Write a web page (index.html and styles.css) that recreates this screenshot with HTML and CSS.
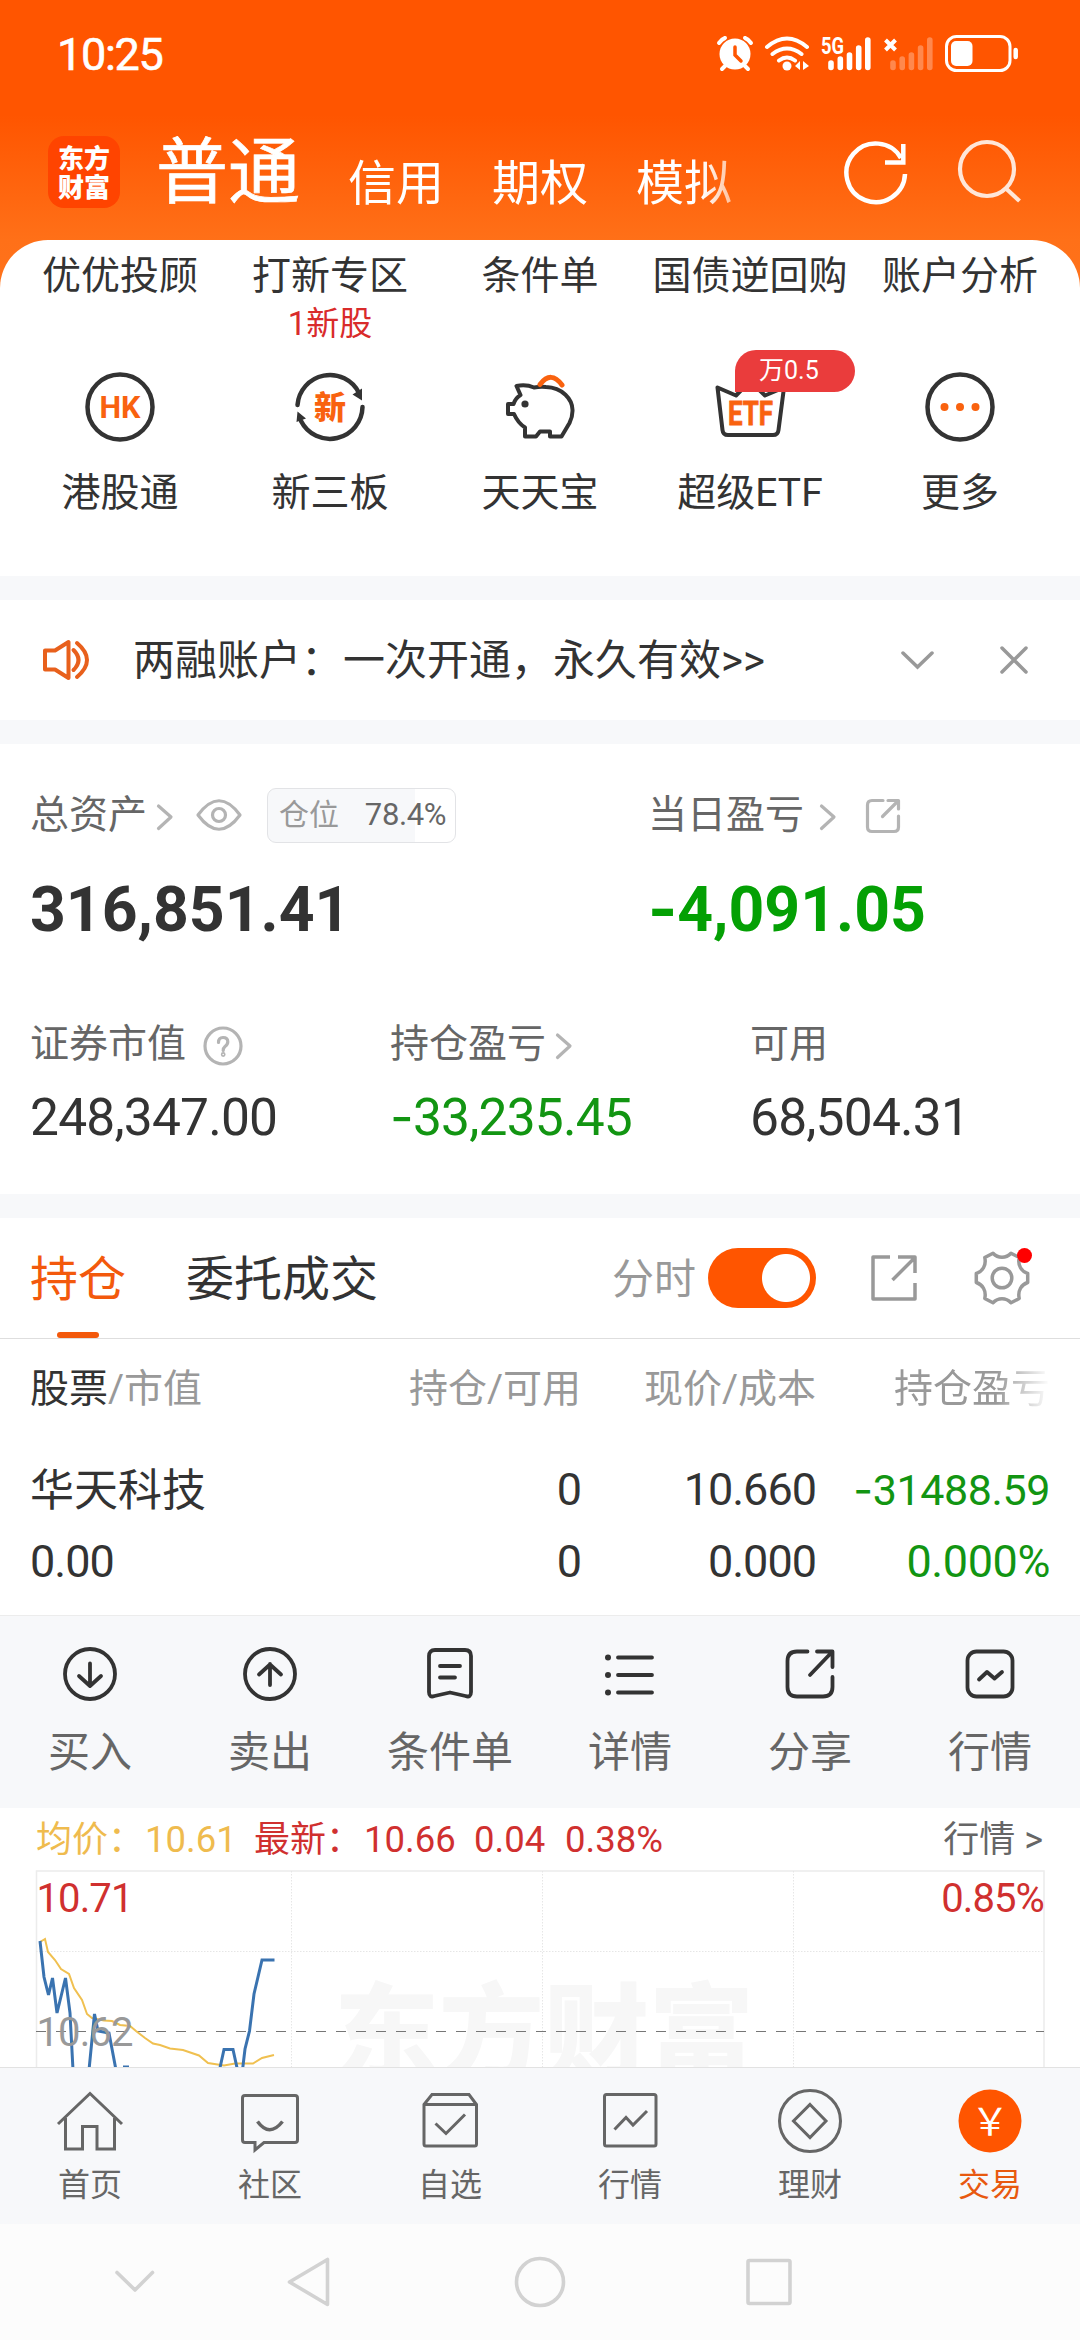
FILE: index.html
```html
<!DOCTYPE html>
<html lang="zh-CN">
<head>
<meta charset="utf-8">
<title>东方财富 交易</title>
<link rel="stylesheet" href="styles.css">
</head>
<body>
<div class="screen">

  <header class="top">
    <div class="status">
      <span class="time">10:25</span>
      <svg class="status-icons" width="310" height="40" viewBox="712 34 310 40" fill="none" stroke="#fff" stroke-linecap="round">
        <circle cx="735" cy="54" r="15.5" fill="#fff" stroke="none"/>
        <path d="M719 43q3-4 6-5M751 43q-3-4-6-5M725 66l-3 3M745 66l3 3" stroke-width="4"/>
        <path d="M735 47v8l6 6" stroke="#ff5500" stroke-width="3.5"/>
        <path d="M767 47q20-17 40 0M772.500 54q14.500-11 29 0M779 60.500q8-6 16 0" stroke-width="4"/>
        <circle cx="787" cy="66" r="4.500" fill="#fff" stroke="none"/>
        <path d="M795 66l5-5v9zM809 66l-6-5v9z" fill="#fff" stroke="none"/>
        <text class="net" x="821" y="53.500" textLength="23" lengthAdjust="spacingAndGlyphs">5G</text>
        <path d="M831 63v4.500M840.300 59v8.500M849.500 55v12.500M858.700 48v19.500M867.800 40v27.500" stroke-width="5.600"/>
        <path d="M893 63v4.500M902.200 59v8.500M911.400 55v12.500M920.600 48v19.500M929.800 40v27.500" stroke-width="5.600" opacity=".3"/>
        <path d="M885.500 40l10 10M895.500 40l-10 10" stroke-width="4" stroke-linecap="butt"/>
        <rect x="946.500" y="36.500" width="63.500" height="34" rx="10" stroke-width="3"/>
        <rect x="951" y="41" width="21.500" height="25" rx="5" fill="#fff" stroke="none"/>
        <path d="M1015.700 50v7" stroke-width="4.500"/>
      </svg>
    </div>
    <div class="bar">
      <div class="logo"><span>东方</span><span>财富</span></div>
      <nav class="accounts">
        <span class="acc on">普通</span><span class="acc">信用</span><span class="acc">期权</span><span class="acc">模拟</span>
      </nav>
      <svg class="refresh" width="70" height="70" viewBox="841 138 70 70" fill="none" stroke="#fff" stroke-width="4.500">
        <path d="M905 174a29.300 29.300 0 1 1-4-16M903.300 144v18.500H885"/>
      </svg>
      <svg class="search" width="70" height="70" viewBox="954 134 70 70" fill="none" stroke="#ffe6d8" stroke-width="4.200">
        <circle cx="987" cy="169" r="27"/><path d="M1006 188.500l13.500 12.500"/>
      </svg>
    </div>
  </header>

  <section class="panel">
    <div class="shortcut">
      <span class="lbl">优优投顾</span><span class="sub"></span>
      <svg width="80" height="80" viewBox="0 0 80 80"><circle cx="40" cy="40" r="32.500" class="ring"/><text class="glyph" x="19.500" y="51" font-size="31" textLength="41" lengthAdjust="spacingAndGlyphs">HK</text></svg>
      <span class="lbl">港股通</span>
    </div>
    <div class="shortcut">
      <span class="lbl">打新专区</span><span class="sub">1新股</span>
      <svg width="80" height="80" viewBox="0 0 80 80"><path class="ring" d="M7.500 38A32.500 32.500 0 0 1 69 26M72.500 40A32.500 32.500 0 0 1 11 54"/><path class="tip" d="M62.500 27.500L72 21.500V33.500zM7.500 44.500L16 51.500L6.500 55z"/><text class="glyph heavy" x="24" y="51.500" font-size="32">新</text></svg>
      <span class="lbl">新三板</span>
    </div>
    <div class="shortcut">
      <span class="lbl">条件单</span><span class="sub"></span>
      <svg width="80" height="80" viewBox="0 0 80 80"><path class="ring pig" d="M16.500 19Q26 17 34 20.500Q40 19.500 46 20C62 20.500 73 32 72.500 44Q72.500 50 69.500 56L61.500 69.500H50V64.500H40L36 69.500H25V60.500Q18 56 14 47H8V37H13.500Q15.500 31 20.500 28Z"/><circle cx="25" cy="37" r="3.600" class="tip"/><path d="M40 17.500Q51 3 62 18" fill="none" stroke="#f9620f" stroke-width="5" stroke-linecap="round"/></svg>
      <span class="lbl">天天宝</span>
    </div>
    <div class="shortcut">
      <span class="lbl">国债逆回购</span><span class="sub"></span>
      <svg width="80" height="80" viewBox="0 0 80 80"><path class="ring etf" d="M7.500 20.500L26 28.500L40 14L55 28.500L74 20.500L68.500 63Q68 68 63 68H18Q13 68 12.500 63Z"/><text class="glyph thick" x="18" y="57.800" font-size="33" textLength="45" lengthAdjust="spacingAndGlyphs">ETF</text></svg>
      <span class="lbl">超级ETF</span>
      <span class="badge">万0.5</span>
    </div>
    <div class="shortcut">
      <span class="lbl">账户分析</span><span class="sub"></span>
      <svg width="80" height="80" viewBox="0 0 80 80"><circle cx="40" cy="40" r="32.500" class="ring"/><g fill="#f9620f"><circle cx="24.500" cy="40" r="4"/><circle cx="40" cy="40" r="4"/><circle cx="55.500" cy="40" r="4"/></g></svg>
      <span class="lbl">更多</span>
    </div>
  </section>

  <section class="notice">
    <svg width="50" height="44" viewBox="41 638 50 44" fill="none" stroke="#e8601c" stroke-width="4" stroke-linejoin="round" stroke-linecap="round"><path d="M45 650.500H55L68.500 642V678L55 669.500H45ZM73.500 650q10 10 0 20M77 643q20 17 0 34"/></svg>
    <span class="msg">两融账户：一次开通，永久有效&gt;&gt;</span>
    <svg width="34" height="24" viewBox="0 0 34 24" class="grey"><path d="M3 5l14.500 14L32 5"/></svg>
    <svg width="30" height="30" viewBox="0 0 30 30" class="grey close"><path d="M3 3l24 24M27 3L3 27"/></svg>
  </section>

  <section class="assets">
    <div class="pair">
      <div class="total">
        <div class="cap">总资产
          <svg class="pale go" width="18" height="28" viewBox="0 0 18 28"><path d="M2.500 3l12.500 11L2.500 25.500"/></svg>
          <svg class="pale eye" width="46" height="34" viewBox="0 0 46 34"><path d="M2 17Q23-11.500 44 17Q23 45.500 2 17Z"/><circle cx="23" cy="17" r="6.500"/></svg>
          <span class="ratio"><i>仓位</i><b>78.4%</b></span>
        </div>
        <div class="big">316,851.41</div>
      </div>
      <div>
        <div class="cap">当日盈亏
          <svg class="pale go wide" width="18" height="28" viewBox="0 0 18 28"><path d="M2.500 3l12.500 11L2.500 25.500"/></svg>
          <svg class="pale out" width="38" height="38" viewBox="0 0 38 38"><path d="M19 3.500H8Q3.500 3.500 3.500 8V30Q3.500 34.500 8 34.500H30Q34.500 34.500 34.500 30V19M24 3.500H34.500V12M34 4L18.500 19.500"/></svg>
        </div>
        <div class="big down"><i class="minus">-</i>4,091.05</div>
      </div>
    </div>
    <div class="trio">
      <div>
        <div class="cap">证券市值
          <svg class="pale help" width="42" height="42" viewBox="0 0 42 42"><circle cx="21" cy="21" r="18"/><path d="M16.500 17.500Q16.500 12.500 21 12.500Q25.800 12.500 25.800 16.800Q25.800 19.500 23 21.500Q21.200 23 21.200 25.500"/><circle cx="21.200" cy="29.500" r=".8"/></svg>
        </div>
        <div class="num">248,347.00</div>
      </div>
      <div>
        <div class="cap">持仓盈亏
          <svg class="pale go" width="18" height="28" viewBox="0 0 18 28"><path d="M2.500 3l12.500 11L2.500 25.500"/></svg>
        </div>
        <div class="num down"><i class="minus">-</i>33,235.45</div>
      </div>
      <div>
        <div class="cap">可用</div>
        <div class="num">68,504.31</div>
      </div>
    </div>
  </section>

  <section class="tabs">
    <span class="tab on">持仓</span>
    <span class="tab">委托成交</span>
    <span class="tlabel">分时</span>
    <span class="toggle"></span>
    <svg class="mid share" width="50" height="50" viewBox="869 1253 50 50"><path d="M890 1257H873V1299H915V1283M898 1257H915V1273M914.500 1258L892.500 1280"/></svg>
    <svg class="mid gear" width="64" height="64" viewBox="972 1246 64 64">
      <path d="M984.800 1257.500L993 1253.200C998 1258.500 1006 1258.500 1011 1253.200L1019.200 1257.500C1017.500 1265.500 1021.500 1271.500 1027.700 1273.500V1282.500C1021.500 1284.500 1017.500 1290.500 1019.200 1298.500L1011 1302.800C1006 1297.500 998 1297.500 993 1302.800L984.800 1298.500C986.500 1290.500 982.500 1284.500 976.300 1282.500V1273.500C982.500 1271.500 986.500 1265.500 984.800 1257.500Z"/><circle cx="1002" cy="1278" r="9.800"/>
      <circle cx="1024.500" cy="1255.500" r="7.500" fill="#f00" stroke="none"/>
    </svg>
  </section>

  <section class="table">
    <div class="row head"><span><em>股票</em>/市值</span><span>持仓/可用</span><span>现价/成本</span><span class="fade">持仓盈亏</span></div>
    <div class="row first"><span class="name">华天科技</span><span>0</span><span>10.660</span><span class="down small"><i class="minus">-</i>31488.59</span></div>
    <div class="row"><span>0.00</span><span>0</span><span>0.000</span><span class="down pct">0.000%</span></div>
  </section>

  <section class="actions">
    <div><svg width="60" height="60" viewBox="0 0 60 60"><circle cx="30" cy="30" r="25"/><path d="M30 19.500V41M19 32l11 10L41 32"/></svg><span>买入</span></div>
    <div><svg width="60" height="60" viewBox="0 0 60 60"><circle cx="30" cy="30" r="25"/><path d="M30 41V20M19 30.500l11-10l11 10"/></svg><span>卖出</span></div>
    <div><svg width="60" height="60" viewBox="0 0 60 60"><path d="M15 6H45Q51 6 51 12V48Q51 54 45.500 52L30 48.500L14.500 52Q9 54 9 48V12Q9 6 15 6ZM20 22H40M20 33.500H35"/></svg><span>条件单</span></div>
    <div><svg width="60" height="60" viewBox="0 0 60 60"><path d="M18 13.500H52M18 31H52M18 48.500H52"/><g class="dots"><circle cx="8" cy="13.500" r="3"/><circle cx="8" cy="31" r="3"/><circle cx="8" cy="48.500" r="3"/></g></svg><span>详情</span></div>
    <div><svg width="60" height="60" viewBox="0 0 60 60"><path d="M27.500 7.500H17Q7.500 7.500 7.500 17V43Q7.500 52.500 17 52.500H43Q52.500 52.500 52.500 43V33M37 7.500H52.500V23M52 8L30 31"/></svg><span>分享</span></div>
    <div><svg width="60" height="60" viewBox="0 0 60 60"><rect x="7.500" y="7.500" width="45" height="45" rx="9"/><path d="M19 35.500l8-7.500l7.500 6.500L42 28"/></svg><span>行情</span></div>
  </section>

  <section class="quote">
    <div class="legend">
      <span class="avg">均价：</span><span class="avg v1">10.61</span>
      <span class="up n2">最新：</span><span class="up v2">10.66</span><span class="up v3">0.04</span><span class="up v4">0.38%</span>
      <span class="more">行情 &gt;</span>
    </div>
    <svg class="chart" width="1080" height="197" viewBox="0 1870 1080 197" fill="none">
      <text class="mark" x="334" y="2071" textLength="420">东方财富</text>
      <path d="M36.500 2067V1871H1044V2067" stroke="#ececec" stroke-width="1.500"/>
      <path d="M36 1951.500H1044M291.500 1871V2067M542.500 1871V2067M793.500 1871V2067" stroke="#e6e6e6" stroke-dasharray="1.500 1.500"/>
      <path d="M36 2031.500H1044" stroke="#777" stroke-dasharray="10 10"/>
      <path d="M40 1942L45 1939L48 1952L55 1960L61 1969L69 1974L74 1988L82 2000L87 2014L92 2018L104 2020.500L112 2021L120 2025L130 2026L136 2031L145 2038L153 2043.500L160 2045L170 2048.500L183 2050L199 2055.500L208 2063L224 2065.500L235 2063.500L253 2063.500L262 2058L274 2055" stroke="#f0c050" stroke-width="2"/>
      <path d="M40 1941L44 1977L48.500 1995L52.500 1978L57 2013L65.500 1978L70 2013L73 2070M89 2070L94.500 2014L98 2031L109 2033L116 2070M123 2067H129M219.500 2070L224 2049.500H233L237.500 2070M242.500 2070L245 2049L249.500 2031L254 1994L262 1960H274.500" stroke="#3a73b0" stroke-width="3"/>
      <text class="lab up" x="36.500" y="1912">10.71</text>
      <text class="lab up" x="1044" y="1912" text-anchor="end">0.85%</text>
      <text class="lab flat" x="36.500" y="2046">10.62</text>
    </svg>
  </section>

  <nav class="dock">
    <div><svg width="72" height="66" viewBox="54 2088 72 66"><path d="M58 2124L90 2093.500L122 2124M65.500 2118V2149H82.500V2126.500H97V2149H114.500V2118"/></svg><span>首页</span></div>
    <div><svg width="72" height="66" viewBox="234 2088 72 66"><path d="M245 2095.500H295Q297.500 2095.500 297.500 2098V2140Q297.500 2142.500 295 2142.500H264L255 2150V2142.500H245Q242.500 2142.500 242.500 2140V2098Q242.500 2095.500 245 2095.500Z"/><path d="M257.500 2121.500q12 16.500 25 0" stroke-width="3.500"/></svg><span>社区</span></div>
    <div><svg width="72" height="66" viewBox="413 2088 72 66"><path d="M423 2104.500L431 2094.500H468L475.500 2104.500V2144Q475.500 2146 473.500 2146H425Q423 2146 423 2144ZM423 2104.500H475.500M434.500 2123.500L445 2133.500L464 2114.500"/></svg><span>自选</span></div>
    <div><svg width="72" height="66" viewBox="593 2088 72 66"><rect x="603.500" y="2094.500" width="51.500" height="51.500" rx="2"/><path d="M613.500 2129.500L625 2117.500L632 2125L646 2111"/></svg><span>行情</span></div>
    <div><svg width="72" height="66" viewBox="774 2088.500 72 66"><circle cx="810" cy="2121.500" r="30.500"/><path d="M810 2105L826 2121.500L810 2138L793.500 2121.500Z"/></svg><span>理财</span></div>
    <div class="on"><svg width="72" height="66" viewBox="0 0 72 66"><circle cx="36" cy="33" r="31.500" fill="#ff5500" stroke="none"/><text class="yen" x="36" y="47" text-anchor="middle">￥</text></svg><span>交易</span></div>
  </nav>

  <div class="sysnav">
    <svg width="1080" height="116" viewBox="0 2224 1080 116"><path d="M117 2272.500L135 2290L152.500 2272.500M327.500 2259.500V2304.500L289.500 2282Z"/><circle cx="540" cy="2282" r="23.500"/><rect x="748" y="2260.500" width="42" height="43" rx="1.500"/></svg>
  </div>
</div>
</body>
</html>
```
FILE: styles.css
```css
* { box-sizing: border-box; margin: 0; padding: 0; }
body { width: 1080px; background: #f7f8fa; font-family: Roboto, "Noto Sans CJK SC", sans-serif; color: #333; }
i, em, b { font-style: normal; font-weight: 400; }
svg { display: block; flex: none; }
span { white-space: nowrap; }
.screen { width: 1080px; height: 2340px; overflow: hidden; display: flex; flex-direction: column; }
.screen > * { flex: none; }

/* header */
.top { height: 300px; margin-bottom: -60px; background: linear-gradient(#ff5500 0, #ff5500 115px, #ff7018 240px, #ff731c 300px); }
.status { height: 108px; display: flex; align-items: center; justify-content: space-between; padding: 0 58px 0 57px; color: #fff; }
.time { font-size: 45px; font-weight: 400; letter-spacing: -1.3px; -webkit-text-stroke: .6px #fff; }
.net { font-size: 23px; font-weight: 700; fill: #fff; stroke: none; }
.bar { height: 128px; display: flex; align-items: center; padding-left: 48px; color: #fff; }
.logo { width: 72px; height: 72px; border-radius: 16px; background: #ff4400; display: flex; flex-direction: column; align-items: center; justify-content: center; font-size: 26px; line-height: 29px; font-weight: 900; font-family: "Noto Sans CJK SC", sans-serif; padding-bottom: 3px; }
.accounts { width: 620px; margin-left: 36px; display: flex; align-items: center; gap: 48px; -webkit-mask-image: linear-gradient(90deg, #000 88%, transparent); mask-image: linear-gradient(90deg, #000 88%, transparent); }
.acc { font-size: 48px; line-height: 72px; padding-top: 24px; }
.acc.on { font-size: 72px; line-height: 84px; padding-top: 2px; -webkit-text-stroke: .7px #fff; }
.refresh { margin-left: 65px; margin-top: 2px; }
.search { margin-left: 43px; margin-top: -6px; }

/* shortcuts */
.panel { height: 336px; padding: 12px 15px 0; background: #fff; border-radius: 48px 48px 0 0; display: grid; grid-template-columns: repeat(5, 210px); }
.shortcut { position: relative; display: flex; flex-direction: column; align-items: center; }
.lbl { font-size: 39px; line-height: 48px; }
.sub { font-size: 33px; line-height: 44px; height: 44px; margin-top: 2px; margin-bottom: 21px; color: #d92b2b; }
.shortcut svg { margin-bottom: 22px; }
.ring { fill: none; stroke: #333; stroke-width: 4.5; stroke-linejoin: round; stroke-linecap: round; }
.pig, .etf { stroke-width: 4; }
.tip { fill: #333; }
.glyph { fill: #f9620f; font-weight: 700; }
.thick { stroke: #f9620f; stroke-width: .8; }
.heavy { font-weight: 900; }
.badge { position: absolute; left: 90px; top: 98px; width: 120px; height: 42px; border-radius: 21px 21px 21px 0; background: #ea3c3c; color: #fff; font-size: 25px; line-height: 42px; padding-left: 24px; }

/* notice */
.notice { margin-top: 24px; height: 120px; background: #fff; display: flex; align-items: center; padding: 0 51px 0 41px; }
.msg { font-size: 42px; line-height: 60px; margin: 2px auto 0 42px; }
.grey { fill: none; stroke: #999; stroke-width: 3.5; stroke-linecap: round; }
.close { margin-left: 65px; }

/* assets */
.assets { margin-top: 24px; height: 450px; background: #fff; padding: 41px 30px 0; color: #333; }
.cap { display: flex; align-items: center; font-size: 39px; line-height: 60px; height: 60px; color: #666; }
.pair { display: grid; grid-template-columns: 618px auto; }
.pale { fill: none; stroke: #b4b4b4; stroke-width: 3.2; stroke-linecap: round; stroke-linejoin: round; }
.go { margin: 4px 0 0 9px; }
.go.wide { margin-left: 15px; }
.eye { margin-left: 22px; }
.out { margin: 2px 0 0 27px; }
.help { margin: 4px 0 0 16px; }
.ratio { margin-left: 25px; width: 189px; height: 55px; border: 1.500px solid #e2e3e6; border-radius: 9px; background: linear-gradient(90deg, #f7f8fa 78.4%, #fff 78.4%); display: flex; align-items: center; justify-content: space-between; padding: 0 9px 0 11px; }
.ratio i { font-size: 30px; color: #999; }
.ratio b { font-size: 31px; letter-spacing: -.4px; }
.big { font-size: 62.5px; font-weight: 700; line-height: 80px; height: 80px; margin-top: 25px; margin-bottom: -1px; }
.minus { font-family: Inter, sans-serif; font-weight: inherit; line-height: 0; }
.down { color: #129512; }
.big.down { color: #04a004; }
.trio { display: grid; grid-template-columns: repeat(3, 360px); margin-top: 65px; }
.num { font-size: 51.5px; line-height: 60px; margin-top: 14px; letter-spacing: -.8px; }

/* tabs */
.tabs { margin-top: 24px; height: 121px; background: #fff; border-bottom: 1.500px solid #dedede; display: flex; align-items: center; padding-left: 30px; }
.tab { position: relative; font-size: 48px; line-height: 118px; height: 120px; margin-right: 60px; padding-top: 3px; }
.tab.on { color: #f3590c; }
.tab.on::after { content: ""; position: absolute; left: 27px; bottom: 0; width: 42px; height: 6px; border-radius: 3px; background: #f3590c; }
.tlabel { margin-left: 174px; font-size: 42px; line-height: 60px; color: #999; padding-top: 3px; }
.toggle { margin-left: 12px; width: 108px; height: 60px; border-radius: 30px; background: radial-gradient(circle at 78px 30px, #fff 23.5px, #ff5500 24.5px); }
.mid { fill: none; stroke: #999; stroke-width: 3.5; stroke-linejoin: round; stroke-linecap: butt; }
.share { margin-left: 53px; }
.gear { margin-left: 53px; }

/* holdings */
.table { height: 277px; background: #fff; border-bottom: 1.500px solid #ececec; padding: 14px 30px 0; }
.row { display: grid; grid-template-columns: 346px 205px 235px 234px; font-size: 45px; line-height: 72px; height: 73px; text-align: right; letter-spacing: -1px; }
.row > :first-child { text-align: left; }
.row.head { font-size: 39px; color: #999; margin-bottom: 27px; letter-spacing: 0; }
.head em { color: #333; }
.row .small { font-size: 43px; letter-spacing: -.4px; }
.row .pct { letter-spacing: -.4px; }
.row.first > span { padding-top: 1px; }
.row .name { font-size: 44px; letter-spacing: 0; }
.row.first > .name { padding-top: 2px; }
.fade { -webkit-mask-image: linear-gradient(90deg, #000 77%, transparent); mask-image: linear-gradient(90deg, #000 77%, transparent); }

.actions { height: 192px; background: #f7f8fa; display: grid; grid-template-columns: repeat(6, 180px); padding-top: 28px; }
.actions div, .dock div { display: flex; flex-direction: column; align-items: center; }
.actions svg { fill: none; stroke: #333; stroke-width: 3.8; stroke-linecap: round; stroke-linejoin: round; }
.actions .dots { fill: #333; stroke: none; }
.actions span { font-size: 42px; line-height: 50px; color: #666; margin-top: 24px; }

/* intraday chart */
.quote { height: 259px; background: #fff; }
.legend { height: 62px; display: flex; align-items: center; font-size: 36px; line-height: 62px; padding: 2px 37px 0 36px; }
.avg { color: #efbb4e; }
.up { color: #d0302f; fill: #d0302f; }
.v1, .v2, .v3, .v4 { font-size: 36.5px; }
.v1 { width: 84px; margin-left: 1px; }
.n2 { margin-left: 25px; }
.v2 { width: 110px; margin-left: 2px; }
.v3 { width: 91px; }
.more { margin-left: auto; color: #666; }
.mark { font: 900 105px "Noto Sans CJK SC", sans-serif; fill: #f7f7f7; }
.lab { font-size: 40px; letter-spacing: -.9px; }
.flat { fill: #999; }

/* bottom tabs */
.dock { height: 157px; background: #f7f8fa; border-top: 1.500px solid #e2e2e2; display: grid; grid-template-columns: repeat(6, 180px); padding-top: 20px; }
.dock svg { fill: none; stroke: #666; stroke-width: 3; }
.dock span { font-size: 32px; line-height: 40px; color: #666; margin-top: 11px; }
.dock .on span { color: #e8590f; }
.dock .yen { font: 400 38px "Noto Sans CJK SC", sans-serif; fill: #fff; stroke: none; }
.sysnav { height: 116px; background: #fcfcfc; }
.sysnav svg { fill: none; stroke: #d2d2d2; stroke-width: 3.6; stroke-linejoin: round; stroke-linecap: round; }
```
